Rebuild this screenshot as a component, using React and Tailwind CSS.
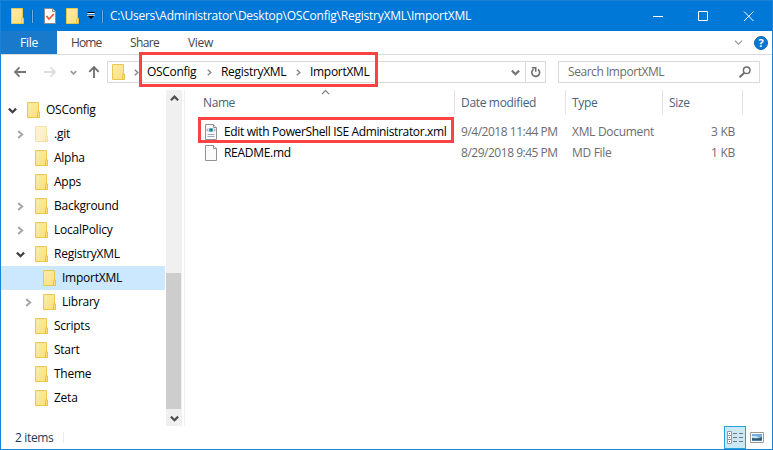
import React from "react";

function Folder({ faded = false, className = "" }) {
  return (
    <svg width="14" height="16" viewBox="0 0 14 16" className={`shrink-0 ${faded ? "opacity-50" : ""} ${className}`}>
      <defs>
        <linearGradient id="folderFill" x1="0" y1="0" x2="1" y2="1">
          <stop offset="0" stopColor="#ffeba6" />
          <stop offset="1" stopColor="#fddf83" />
        </linearGradient>
      </defs>
      <path d="M.5 .5h11v15H.5z" fill="url(#folderFill)" stroke="#ebc74b" />
      <path d="M10.500 15.500v-4l.8-1.500h1.200v5.500z" fill="#fbe18c" stroke="#e6bd45" strokeWidth=".9" />
    </svg>
  );
}

function Chevron({ dir = "right", color = "#a0a0a0", size = 8, weight = 2, className = "" }) {
  const paths = {
    right: "M2 .8 5.500 4 2 7.200",
    down: "M.8 2.300 4 5.500 7.200 2.300",
    up: "M.8 5.500 4 2.300 7.200 5.500",
  };
  return (
    <svg width={size} height={size} viewBox="0 0 8 8" fill="none" stroke={color} strokeWidth={weight} className={`shrink-0 ${className}`}>
      <path d={paths[dir]} />
    </svg>
  );
}

function Divider() {
  return <span className="h-[13px] w-[3px] border-x border-x-[#1c5fa3] bg-[#6fb1e8]" />;
}

function TitleBar() {
  return (
    <div className="flex h-[31px] shrink-0 items-center border-t border-[#1883d7] bg-[#0078d7] text-white">
      <Folder className="ml-[10px]" />
      <span className="ml-[6px] flex"><Divider /></span>
      <svg width="12" height="16" viewBox="0 0 12 16" className="ml-[10px]">
        <path d="M.5.5h8l3 3v12H.5z" fill="#fafafa" stroke="#8d8d8d" />
        <path d="M8.500.5v3h3" fill="#ddd" stroke="#8d8d8d" />
        <path d="m2.500 8 2.500 3 4.800-5" fill="none" stroke="#e8592b" strokeWidth="1.800" />
      </svg>
      <Folder className="ml-[10px]" />
      <svg width="8" height="8" viewBox="0 0 8 8" className="ml-[7px]">
        <path d="M.5 1.500h7" stroke="#fff" />
        <path d="M.5.5h7" stroke="#000" />
        <path d="M0 3h8L4 7z" fill="#000" />
        <path d="M0 3.500h8" stroke="#fff" strokeWidth=".7" />
      </svg>
      <span className="ml-[6px] flex"><Divider /></span>
      <span className="ml-[6px] grow whitespace-nowrap text-[12px] tracking-[-0.23px]">
        C:\Users\Administrator\Desktop\OSConfig\RegistryXML\ImportXML
      </span>
      <svg width="120" height="12" viewBox="0 0 120 12" fill="none" stroke="#fff" className="mr-[9px]">
        <path d="M10 6.500h10M55.500 1.500h9v9h-9zM101 1.500l9.500 9.500M110.500 1.500l-9.500 9.500" />
      </svg>
    </div>
  );
}

function Ribbon() {
  return (
    <div className="flex h-[24px] shrink-0 items-center border-b border-[#dadbdc] text-[12px] text-[#444]">
      <div className="flex h-[23px] w-[56px] items-center justify-center bg-[#1979ca] tracking-[-0.2px] text-white">File</div>
      <span className="ml-[14px] w-[59px] tracking-[-0.9px]">Home</span>
      <span className="w-[58px] tracking-[-0.6px]">Share</span>
      <span className="grow tracking-[-0.3px]">View</span>
      <Chevron dir="down" size={9} weight={1.1} color="#999" className="mr-[11px]" />
      <div className="mr-[4px] flex h-[14px] w-[14px] items-center justify-center rounded-full border border-[#1669b0] bg-[#0878d4] text-[11px] font-bold leading-none text-white">?</div>
    </div>
  );
}

function NavArrow({ d, color, className }) {
  return (
    <svg width="12" height="12" viewBox="0 0 12 12" fill="none" stroke={color} strokeWidth="1.800" className={`shrink-0 ${className}`}>
      <path d={d} />
    </svg>
  );
}

function AddressRow() {
  return (
    <div className="flex h-[35px] shrink-0 items-center pb-[1px] text-[12px]">
      <NavArrow className="ml-[13px]" color="#767676" d="M12 6H1M5.500 1.300 1 6l4.500 4.700" />
      <NavArrow className="ml-[18px]" color="#dcdcdc" d="M0 6h11M6.500 1.300 11 6l-4.500 4.700" />
      <Chevron dir="down" size={7} color="#999" className="ml-[14px]" />
      <NavArrow className="ml-[11px]" color="#6e6e6e" d="M6 12V1M1.300 5.800 6 1l4.700 4.800" />
      <div className="ml-[7px] flex h-[22px] w-[439px] items-center border border-[#d9d9d9] text-black">
        <Folder className="ml-[4px]" />
        <Chevron size={7} color="#888" weight={1.700} className="ml-[7px]" />
        <span className="ml-[7px] w-[51px] tracking-[-0.3px]">OSConfig</span>
        <Chevron size={7} color="#888" weight={1.700} className="ml-[8px]" />
        <span className="ml-[8px] w-[66px] tracking-[-0.3px]">RegistryXML</span>
        <Chevron size={7} color="#888" weight={1.700} className="ml-[8px]" />
        <span className="ml-[8px] grow tracking-[-0.3px]">ImportXML</span>
        <Chevron dir="down" size={9} color="#777" className="mr-[5px]" />
        <div className="flex h-full w-[20px] items-center justify-center border-l border-[#d9d9d9]">
          <svg width="10" height="12" viewBox="0 0 10 12" fill="none" stroke="#6e6e6e" strokeWidth="1.600">
            <path d="M7 3.300A3.900 3.900 0 1 1 2.600 3.200" />
            <path d="M.8 1.800H4.700V5.800" />
          </svg>
        </div>
      </div>
      <div className="ml-[12px] flex h-[22px] w-[202px] items-center border border-[#d9d9d9] text-[#6d6d6d]">
        <span className="ml-[9px] grow tracking-[-0.45px]">Search ImportXML</span>
        <svg width="12" height="12" viewBox="0 0 12 12" fill="none" stroke="#6e6e6e" strokeWidth="1.500" className="mr-[8px]">
          <circle cx="7.700" cy="4.300" r="3.300" />
          <path d="M5.300 6.700.6 11.300" strokeWidth="2" />
        </svg>
      </div>
    </div>
  );
}

const tree = [
  { name: "OSConfig", level: 0, state: "open" },
  { name: ".git", level: 1, state: "closed", faded: true },
  { name: "Alpha", level: 1 },
  { name: "Apps", level: 1 },
  { name: "Background", level: 1, state: "closed" },
  { name: "LocalPolicy", level: 1, state: "closed" },
  { name: "RegistryXML", level: 1, state: "open" },
  { name: "ImportXML", level: 2, selected: true },
  { name: "Library", level: 2, state: "closed" },
  { name: "Scripts", level: 1 },
  { name: "Start", level: 1 },
  { name: "Theme", level: 1 },
  { name: "Zeta", level: 1 },
];
const indents = ["pl-[7px]", "pl-[15px]", "pl-[23px]"];

function Tree() {
  return (
    <div className="w-[165px] pt-[8px] text-[12px] tracking-[-0.25px] text-black">
      {tree.map((n) => (
        <div key={n.name} className={`flex h-[24px] items-center ${indents[n.level]} ${n.selected ? "w-[164px] bg-[#cce8ff]" : ""}`}>
          <span className="flex w-[19px] shrink-0">
            {n.state === "open" && <Chevron dir="down" size={9} color="#404040" />}
            {n.state === "closed" && <Chevron size={9} color="#a6a6a6" weight={1.800} />}
          </span>
          <Folder faded={n.faded} />
          <span className="ml-[5px]">{n.name}</span>
        </div>
      ))}
    </div>
  );
}

function ScrollBar() {
  return (
    <div className="flex w-[16px] flex-col items-center bg-[#f0f0f0]">
      <Chevron dir="up" size={9} color="#505050" className="mt-[4px]" />
      <div className="mt-[170px] h-[136px] w-[15px] self-start bg-[#cdcdcd]" />
      <Chevron dir="down" size={9} color="#505050" className="mt-[5px]" />
    </div>
  );
}

function FileIcon({ xml = false }) {
  return (
    <svg width="14" height="16" viewBox="0 0 14 16" className="shrink-0">
      <path d="M1.500.5h8l3 3v12h-11z" fill="#fbfbfb" stroke="#929292" />
      <path d="M9.500.5v3h3" fill="#eee" stroke="#929292" />
      {xml && (
        <g fill="none">
          <ellipse cx="7" cy="6" rx="2.400" ry="2" fill="#3f9fb5" />
          <circle cx="7.200" cy="5.800" r=".8" fill="#1f4a66" />
          <path d="M4 4.500 2.700 6 4 7.500M10 4.500 11.300 6 10 7.500" stroke="#7f7f7f" strokeWidth=".8" />
          <path d="M3.500 10.500h7M3.500 12.500h7" stroke="#9aa9bd" />
        </g>
      )}
    </svg>
  );
}

function FileRow({ name, date, type, size, xml, nameClass }) {
  return (
    <div className="flex h-[21px] items-center whitespace-nowrap text-[12px] text-[#6d6d6d]">
      <div className="flex w-[257px] items-center text-black">
        <FileIcon xml={xml} />
        <span className={`ml-[6px] ${nameClass}`}>{name}</span>
      </div>
      <span className="w-[111px] tracking-[-0.48px]">{date}</span>
      <span className="w-[97px] tracking-[-0.3px]">{type}</span>
      <span className="w-[66px] text-right tracking-[-0.3px]">{size}</span>
    </div>
  );
}

function FileList() {
  return (
    <div className="ml-[2px] grow border-l border-[#f0f0f0]">
      <div className="flex h-[24px] items-center text-[12px] text-[#4c607a]">
        <div className="relative flex h-full w-[270px] items-center border-r border-[#e2e2e2] pl-[18px] pt-[2px] tracking-[-0.4px]">
          Name
          <Chevron dir="up" size={9} weight={1} color="#777" className="absolute left-[136px] top-[-2px]" />
        </div>
        <div className="flex h-full w-[111px] items-center border-r border-[#e2e2e2] pl-[6px] pt-[2px] tracking-[-0.33px]">Date modified</div>
        <div className="flex h-full w-[97px] items-center border-r border-[#e2e2e2] pl-[6px] pt-[2px] tracking-[-0.3px]">Type</div>
        <div className="flex h-full w-[80px] items-center border-r border-[#e2e2e2] pl-[6px] pt-[2px] tracking-[-0.3px]">Size</div>
      </div>
      <div className="pl-[19px] pt-[7px]">
        <FileRow xml name="Edit with PowerShell ISE Administrator.xml" date="9/4/2018 11:44 PM" type="XML Document" size="3 KB" nameClass="tracking-[-0.36px]" />
        <FileRow name="README.md" date="8/29/2018 9:45 PM" type="MD File" size="1 KB" nameClass="tracking-[-0.3px]" />
      </div>
    </div>
  );
}

function StatusBar() {
  return (
    <div className="flex h-[23px] shrink-0 items-center text-[12px] text-[#1e395b]">
      <span className="ml-[14px] w-[48px] tracking-[-0.35px]">2 items</span>
      <span className="h-[11px] w-px bg-[#ececec]" />
      <div className="ml-auto flex h-[23px] w-[22px] items-center justify-center border border-[#26a0da] bg-[#cbe8f6]">
        <svg width="16" height="13" viewBox="0 0 16 13" fill="none" stroke="#9a9a9a">
          <path d="M.5.5h4v12h-4zM.5 4.500h4M.5 8.500h4" fill="#fff" />
          <path d="M6 2.500h4M12 2.500h4M6 6.500h4M12 6.500h4M6 10.500h4M12 10.500h4" stroke="#777" />
          <path d="M2 2.500h1M2 6.500h1" stroke="#3584c0" />
          <path d="M2 10.500h1" stroke="#b33" />
        </svg>
      </div>
      <svg width="14" height="11" viewBox="0 0 14 11" className="ml-[4px] mr-[8px]">
        <path d="M.5.5h13v10H.5z" fill="#fff" stroke="#999" />
        <path d="M2 2h10v7H2z" fill="#76aee2" />
        <path d="M2 4h4l2 1h4v1H2z" fill="#c6e3f2" />
        <path d="M2 6l4 .5L12 5v4H2z" fill="#315f72" />
        <path d="M2 8h10v1H2z" fill="#4d83ac" />
      </svg>
    </div>
  );
}

export default function App() {
  return (
    <div className="relative h-[450px] w-[773px] overflow-hidden bg-white font-['Open_Sans','Noto_Sans',sans-serif] leading-none">
      <div className="flex h-full flex-col border-x border-b border-[#1883d7]">
        <TitleBar />
        <Ribbon />
        <AddressRow />
        <div className="flex h-[336px] shrink-0">
          <Tree />
          <ScrollBar />
          <FileList />
        </div>
        <StatusBar />
      </div>
      <div className="absolute left-[139px] top-[52px] h-[35px] w-[239px] border-[3px] border-[#fc4243]" />
      <div className="absolute left-[198px] top-[117px] h-[26px] w-[256px] border-[3px] border-[#fc4243]" />
    </div>
  );
}
